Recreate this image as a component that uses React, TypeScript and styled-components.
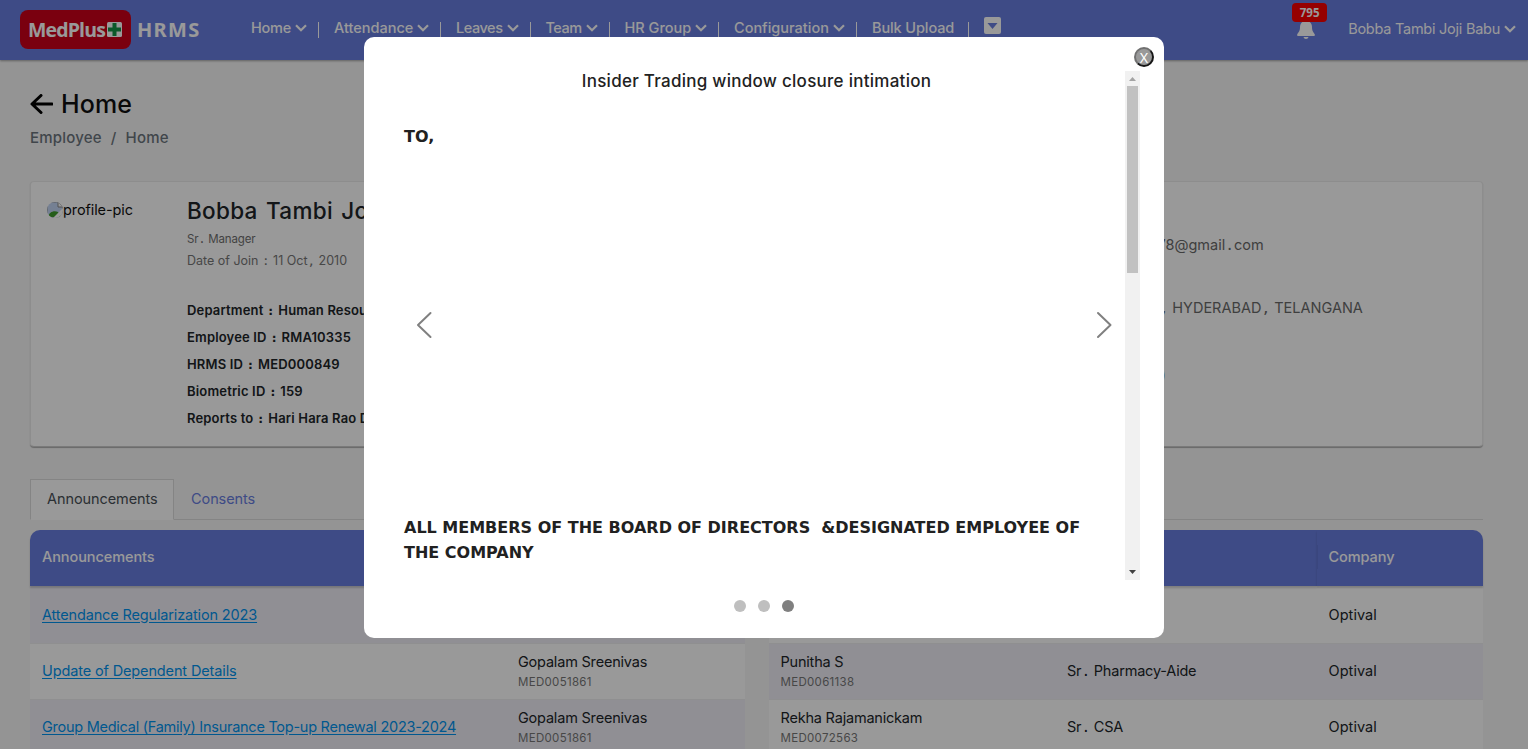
import React from "react";
import styled, { createGlobalStyle, css } from "styled-components";

const GlobalStyle = createGlobalStyle`
  * { box-sizing: border-box; }
  html, body { margin: 0; height: 749px; overflow: hidden; }
  body {
    background: #f7f7f7;
    color: #212529;
    font: 400 14.5px/24px Inter, "Liberation Sans", sans-serif;
  }
`;

const Page = styled.div`
  height: 749px;
  overflow: hidden;
`;

const Header = styled.header`
  display: flex;
  height: 60px;
  padding-left: 20px;
  background: #687ddf;
  color: #fff;
  box-shadow: 0 1px 2px rgba(0, 0, 0, 0.35);
`;

const Brand = styled.div`
  display: flex;
  align-items: center;
  width: 231px;
  height: 59px;
`;

const Logo = styled.div`
  display: flex;
  align-items: center;
  width: 111px;
  height: 39px;
  padding-left: 8px;
  border-radius: 8px;
  background: #cb0019;
  font: 700 19.5px/39px "Open Sans", sans-serif;
  letter-spacing: -0.85px;
  white-space: nowrap;
`;

const LogoCross = styled.svg`
  flex: none;
  margin-left: 2px;
`;

const BrandName = styled.span`
  margin-left: 6px;
  font: 700 20px/39px "Noto Sans", sans-serif;
  letter-spacing: 1.3px;
`;

const Nav = styled.nav`
  display: flex;
  height: 56px;
  align-items: center;
`;

const NavItem = styled.div<{ $width: number; $track: number }>`
  display: flex;
  align-items: center;
  width: ${(p) => p.$width}px;
  font-weight: 550;
  font-size: 14.5px;
  letter-spacing: ${(p) => p.$track}px;
  white-space: nowrap;
`;

const NavCaret = styled.svg`
  flex: none;
  margin-left: 4px;
`;

const Divider = styled.i`
  width: 1px;
  height: 16px;
  margin: 4px 15px 0 auto;
  background: #fff;
`;

const MoreIcon = styled.svg`
  margin-top: -5px;
`;

const Account = styled.div`
  display: flex;
  align-items: center;
  height: 58px;
  margin-left: auto;
  padding-right: 12px;
  font-size: 14.5px;
`;

const AccountName = styled.span`
  letter-spacing: -0.25px;
`;

const Bell = styled.div`
  position: relative;
  width: 18px;
  height: 18px;
  margin: 2px 33px 0 0;
`;

const BellCount = styled.span`
  position: absolute;
  left: -5px;
  top: -18px;
  width: 35px;
  height: 19px;
  border-radius: 4px;
  background: #fb0000;
  font: 700 11.5px/19px "Noto Sans", sans-serif;
  text-align: center;
  z-index: 1;
`;

const Main = styled.main`
  padding: 28px 45px 0 30px;
`;

const TitleRow = styled.h1`
  display: flex;
  align-items: center;
  height: 32px;
  margin: 0;
  color: #101010;
  font-size: 25px;
  font-weight: 550;
  letter-spacing: 0.15px;
`;

const BackArrow = styled.svg`
  margin: 0 8px 0 0;
`;

const Crumbs = styled.div`
  display: flex;
  gap: 9px;
  margin-top: 6px;
  color: #6c757d;
  font-size: 15px;
  font-weight: 550;
  letter-spacing: 0.2px;
`;

const Card = styled.section`
  display: flex;
  height: 266px;
  margin-top: 31px;
  padding: 16px;
  border: 1px solid #ececec;
  border-bottom: 1px solid #ccc;
  border-radius: 4px;
  background: #fff;
  box-shadow: 0 1px 1px rgba(0, 0, 0, 0.3);
`;

const Picture = styled.div`
  display: flex;
  align-items: flex-start;
  width: 140px;
  letter-spacing: -0.1px;
  color: #111;
`;

const BrokenIcon = styled.svg`
  margin-top: 4px;
  border-radius: 50%;
`;

const Profile = styled.div`
  width: 963px;
  white-space: nowrap;
`;

const Name = styled.h2`
  height: 28px;
  margin: -1px 0 0;
  font-size: 22.5px;
  line-height: 28px;
  font-weight: 550;
  letter-spacing: 0.3px;
  word-spacing: 2px;
`;

const Role = styled.div`
  margin-top: 4px;
  height: 20px;
  line-height: 20px;
  color: #6f6f6f;
  font-size: 11.5px;
  letter-spacing: -0.15px;
`;

const Joined = styled.div`
  height: 22px;
  margin-bottom: 26px;
  line-height: 24px;
  color: #777;
  font-size: 12.5px;
`;

const Fact = styled.div`
  height: 27px;
  line-height: 27px;
  font-size: 13px;
  font-weight: 600;
  letter-spacing: 0.17px;
`;

const MonoMark = styled.span`
  font-family: "DejaVu Sans Mono", monospace;
`;

const Contact = styled.div`
  display: flex;
  flex-direction: column;
  padding-top: 35px;
  color: #6a6a6a;
  white-space: nowrap;
`;

const ContactLine = styled.div<{ $indent: number; $height: number }>`
  height: ${(p) => p.$height}px;
  padding-left: ${(p) => p.$indent}px;
`;

const Tabs = styled.div`
  display: flex;
  height: 41px;
  margin-top: 32px;
  border-bottom: 1px solid #dcdcdc;
`;

const Tab = styled.div<{ $active?: boolean }>`
  height: 41px;
  padding: 0 16px;
  border: 1px solid transparent;
  line-height: 38px;
  letter-spacing: -0.08px;
  color: #687ddf;
  ${(p) =>
    p.$active &&
    css`
      width: 144px;
      border-color: #dcdcdc #dcdcdc #fff;
      background: #fff;
      color: #495057;
    `}
`;

const Tables = styled.div`
  display: flex;
  gap: 24px;
  margin-top: 10px;
`;

const Table = styled.div<{ $columns: string }>`
  display: grid;
  grid-template-columns: ${(p) => p.$columns};
  grid-template-rows: 56px 58px 56px 56px;
  flex: 1;
`;

const Head = styled.div<{ $corner?: "left" | "right"; $rule?: boolean }>`
  display: flex;
  align-items: center;
  padding: 0 12px 2px 0;
  background: #687ddf;
  color: #fff;
  font-weight: 550;
  letter-spacing: -0.08px;
  box-shadow: 0 2px 2px rgba(0, 0, 0, 0.18);
  border-top-left-radius: ${(p) => (p.$corner === "left" ? 10 : 0)}px;
  border-top-right-radius: ${(p) => (p.$corner === "right" ? 10 : 0)}px;
  z-index: 1;
  &::before {
    content: "";
    width: 1px;
    height: 24px;
    margin: 0 11px 0 0;
    background: ${(p) => (p.$rule ? "#6276d2" : "transparent")};
  }
`;

const Cell = styled.div<{ $tint?: boolean; $first?: boolean }>`
  display: flex;
  flex-direction: column;
  justify-content: center;
  padding: 0 0 ${(p) => (p.$first ? 0 : 2)}px 12px;
  border-bottom: 1px solid #efeff1;
  background: ${(p) => (p.$tint ? "#f0eff7" : "#fff")};
  white-space: nowrap;
`;

const Link = styled.a<{ $track: number }>`
  color: #0093ee;
  letter-spacing: ${(p) => p.$track}px;
  text-decoration: underline;
  text-underline-offset: 2px;
`;

const Person = styled.span`
  height: 20px;
  margin-top: 2px;
  line-height: 20px;
  letter-spacing: -0.2px;
`;

const Code = styled.small`
  height: 20px;
  color: #777;
  font-size: 11.5px;
  letter-spacing: 0.31px;
  line-height: 20px;
`;

const Position = styled.span`
  letter-spacing: -0.2px;
`;

const Company = styled.span`
  letter-spacing: 0.06px;
`;

const Backdrop = styled.div`
  position: fixed;
  inset: 0;
  z-index: 10;
  display: flex;
  justify-content: center;
  align-items: flex-start;
  padding-top: 37px;
  background: rgba(0, 0, 0, 0.4);
`;

const Dialog = styled.div`
  position: relative;
  display: flex;
  flex-direction: column;
  width: 800px;
  height: 601px;
  padding: 34px 24px 0;
  border-radius: 10px;
  background: #fff;
`;

const Close = styled.button`
  position: absolute;
  right: 10px;
  top: 10px;
  width: 20px;
  height: 20px;
  padding: 1px 0 0;
  border: 2px solid;
  border-color: #707070 #161616 #161616 #707070;
  border-radius: 50%;
  background: #999;
  color: #fff;
  font: 400 13px/16px Inter, sans-serif;
`;

const Notice = styled.div`
  display: flex;
  height: 509px;
`;

const NoticeBody = styled.div`
  flex: 1;
  padding: 0 16px;
  color: #212121;
  font: 700 16px/25px "DejaVu Sans", sans-serif;
`;

const NoticeTitle = styled.h3`
  height: 20px;
  margin: 0 0 33px;
  font: 550 17px/20px Inter, sans-serif;
  letter-spacing: 0.27px;
  text-align: center;
  color: #222;
`;

const Recipient = styled.p`
  height: 391px;
  margin: 0;
`;

const Audience = styled.p`
  margin: 0;
  white-space: pre-wrap;
`;

const ScrollTrack = styled.div`
  display: flex;
  flex-direction: column;
  align-items: center;
  width: 15px;
  background: #f1f1f1;
`;

const ScrollThumb = styled.div`
  width: 11px;
  height: 187px;
  margin-bottom: auto;
  background: #c1c1c1;
`;

const Arrow = styled.svg<{ $side: "left" | "right" }>`
  position: absolute;
  top: 274px;
  ${(p) => (p.$side === "left" ? "left: 52px;" : "right: 52px;")}
`;

const Dots = styled.div`
  display: flex;
  justify-content: center;
  gap: 12px;
  margin-top: 20px;
`;

const Dot = styled.i<{ $active?: boolean }>`
  width: 12px;
  height: 12px;
  border-radius: 50%;
  background: ${(p) => (p.$active ? "#808080" : "#bfbfbf")};
`;

const Caret = () => (
  <NavCaret width="12" height="8" viewBox="0 0 12 8">
    <path d="M1 1.300 6 6.200 11 1.300" fill="none" stroke="#fff" strokeWidth="2.200" />
  </NavCaret>
);

const Spaced = ({ text }: { text: string }) => (
  <>
    {text.split(/([.,:])/).map((part, i) =>
      i % 2 ? <MonoMark key={i}>{part}</MonoMark> : part
    )}
  </>
);

const menu = [
  { label: "Home", width: 83, track: -0.25 },
  { label: "Attendance", width: 122, track: 0 },
  { label: "Leaves", width: 89.5, track: -0.45 },
  { label: "Team", width: 79, track: -0.5 },
  { label: "HR Group", width: 109.5, track: 0 },
  { label: "Configuration", width: 138, track: 0 },
  { label: "Bulk Upload", width: 112, track: -0.1, plain: true },
];

const facts = [
  "Department : Human Resources",
  "Employee ID : RMA10335",
  "HRMS ID : MED000849",
  "Biometric ID : 159",
  "Reports to : Hari Hara Rao D",
];

const notices = [
  { title: "Attendance Regularization 2023", by: "", code: "", track: -0.15 },
  { title: "Update of Dependent Details", by: "Gopalam Sreenivas", code: "MED0051861", track: -0.13 },
  { title: "Group Medical (Family) Insurance Top-up Renewal 2023-2024", by: "Gopalam Sreenivas", code: "MED0051861", track: -0.26 },
];

const staff = [
  { name: "", code: "", role: "" },
  { name: "Punitha S", code: "MED0061138", role: "Sr. Pharmacy-Aide" },
  { name: "Rekha Rajamanickam", code: "MED0072563", role: "Sr. CSA" },
];

export default function App() {
  return (
    <Page>
      <GlobalStyle />
      <Header>
        <Brand>
          <Logo>
            MedPlus
            <LogoCross width="15" height="15" viewBox="0 0 15 15">
              <rect width="15" height="15" rx="1.500" fill="#fff" />
              <path d="M5.500 1h4v4.500H14v4H9.500V14h-4V9.500H1v-4h4.500z" fill="#159447" />
            </LogoCross>
          </Logo>
          <BrandName>HRMS</BrandName>
        </Brand>
        <Nav>
          {menu.map((m) => (
            <NavItem key={m.label} $width={m.width} $track={m.track}>
              {m.label}
              {!m.plain && <Caret />}
              <Divider />
            </NavItem>
          ))}
          <MoreIcon width="17" height="17" viewBox="0 0 17 17">
            <rect width="17" height="17" rx="2" fill="#fff" />
            <path d="M3.500 6h10l-5 6z" fill="#687ddf" />
          </MoreIcon>
        </Nav>
        <Account>
          <Bell>
            <BellCount>795</BellCount>
            <svg width="18" height="18" viewBox="0 0 18 18">
              <path d="M9 0C5 0 3 2.700 3 6.200 3 10.500 1 11.500.3 13.200c-.5 1 .1 1.800 1 1.800h15.400c.9 0 1.500-.8 1-1.800C17 11.500 15 10.500 15 6.200 15 2.700 13 0 9 0zM6.500 16h5c-.3 1.200-1.200 2-2.500 2s-2.200-.8-2.500-2z" fill="#fff" />
            </svg>
          </Bell>
          <AccountName>Bobba Tambi Joji Babu</AccountName>
          <Caret />
        </Account>
      </Header>

      <Main>
        <TitleRow>
          <BackArrow width="23" height="20" viewBox="0 0 23 20">
            <path d="M11 1.500 2 10l9 8.500M2.500 10H22" fill="none" stroke="#000" strokeWidth="3" strokeLinecap="round" strokeLinejoin="round" />
          </BackArrow>
          Home
        </TitleRow>
        <Crumbs>
          <span>Employee</span>
          <span>/</span>
          <span>Home</span>
        </Crumbs>

        <Card>
          <Picture>
            <BrokenIcon width="16" height="16" viewBox="0 0 16 16">
              <path d="M0 0h11l5 5v11H0z" fill="#c3d5f5" stroke="#888" />
              <path d="M1 15c1-5 6-7 10-5l4 5z" fill="#3f9b2c" />
              <path d="M6 16 16 6v10z" fill="#fff" />
              <path d="M11 0v5h5" fill="#fff" stroke="#888" />
            </BrokenIcon>
            profile-pic
          </Picture>
          <Profile>
            <Name>Bobba Tambi Joji Babu</Name>
            <Role><Spaced text="Sr. Manager" /></Role>
            <Joined><Spaced text="Date of Join : 11 Oct, 2010" /></Joined>
            {facts.map((f) => (
              <Fact key={f}><Spaced text={f} /></Fact>
            ))}
          </Profile>
          <Contact>
            <ContactLine $height={63} $indent={7.5}><Spaced text="78@gmail.com" /></ContactLine>
            <ContactLine $height={67} $indent={9.5}><Spaced text=", HYDERABAD, TELANGANA" /></ContactLine>
            <ContactLine $height={24} $indent={10.5}>)</ContactLine>
          </Contact>
        </Card>

        <Tabs>
          <Tab $active>Announcements</Tab>
          <Tab>Consents</Tab>
        </Tabs>

        <Tables>
          <Table $columns="476px 1fr">
            <Head $corner="left">Announcements</Head>
            <Head $corner="right" />
            {notices.map((n, i) => (
              <React.Fragment key={n.title}>
                <Cell $tint={i % 2 === 0} $first={i === 0}>
                  <span><Link $track={n.track}>{n.title}</Link></span>
                </Cell>
                <Cell $tint={i % 2 === 0} $first={i === 0}>
                  <Person>{n.by}</Person>
                  <Code>{n.code}</Code>
                </Cell>
              </React.Fragment>
            ))}
          </Table>
          <Table $columns="286.500px 261.500px 1fr">
            <Head $corner="left" />
            <Head />
            <Head $corner="right" $rule>Company</Head>
            {staff.map((s, i) => (
              <React.Fragment key={i}>
                <Cell $tint={i % 2 === 1} $first={i === 0}>
                  <Person>{s.name}</Person>
                  <Code>{s.code}</Code>
                </Cell>
                <Cell $tint={i % 2 === 1} $first={i === 0}>
                  <Position><Spaced text={s.role} /></Position>
                </Cell>
                <Cell $tint={i % 2 === 1} $first={i === 0}><Company>Optival</Company></Cell>
              </React.Fragment>
            ))}
          </Table>
        </Tables>
      </Main>

      <Backdrop>
        <Dialog role="dialog">
          <Close>X</Close>
          <Notice>
            <NoticeBody>
              <NoticeTitle>Insider Trading window closure intimation</NoticeTitle>
              <Recipient>TO,</Recipient>
              <Audience>{"ALL MEMBERS OF THE BOARD OF DIRECTORS \u00a0&DESIGNATED EMPLOYEE OF THE COMPANY"}</Audience>
            </NoticeBody>
            <ScrollTrack>
              <svg width="15" height="15" viewBox="0 0 15 15"><path d="M4 10h7L7.500 6z" fill="#a3a3a3" /></svg>
              <ScrollThumb />
              <svg width="15" height="15" viewBox="0 0 15 15"><path d="M4 5h7L7.500 9z" fill="#404040" /></svg>
            </ScrollTrack>
          </Notice>
          <Arrow $side="left" width="16" height="28" viewBox="0 0 16 28">
            <path d="M14.500 2 2 14l12.500 12" fill="none" stroke="#808080" strokeWidth="2" strokeLinecap="round" strokeLinejoin="round" />
          </Arrow>
          <Arrow $side="right" width="16" height="28" viewBox="0 0 16 28">
            <path d="M2 2 14.500 14 2 26" fill="none" stroke="#808080" strokeWidth="2" strokeLinecap="round" strokeLinejoin="round" />
          </Arrow>
          <Dots><Dot /><Dot /><Dot $active /></Dots>
        </Dialog>
      </Backdrop>
    </Page>
  );
}
